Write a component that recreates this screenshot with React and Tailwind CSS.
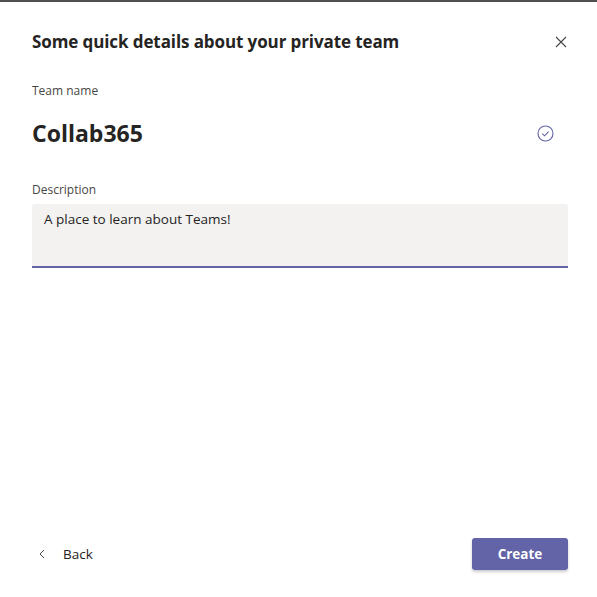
export default function App() {
  return (
    <div className="w-[597px] h-[597px] bg-white flex flex-col text-[#252423]" style={{ fontFamily: '"Open Sans", "Noto Sans", sans-serif' }}>
      <div className="h-[2px] bg-[#4f4f4f] shrink-0" />
      <div className="flex items-center justify-between pl-8 pr-[30px] pt-[28px]">
        <h1 className="text-[17px] font-bold leading-[24px] tracking-[-0.1px]">Some quick details about your private team</h1>
        <svg width="12" height="12" viewBox="0 0 12 12" className="text-[#484644]">
          <path d="M1 1 L11 11 M11 1 L1 11" stroke="currentColor" strokeWidth="1.1" fill="none" />
        </svg>
      </div>
      <div className="pl-8 pr-[29px] pt-[29px]">
        <div className="text-[12px] leading-[16px] text-[#484644]">Team name</div>
        <div className="flex items-center justify-between pt-[18px] pr-[14px]">
          <div className="text-[23px] font-bold leading-[32px]">Collab365</div>
          <svg width="17" height="17" viewBox="0 0 17 17" className="text-[#6264a7]">
            <circle cx="8.5" cy="8.5" r="7.5" stroke="currentColor" strokeWidth="1.1" fill="none" />
            <path d="M5.3 8.7 L7.5 10.8 L11.6 6.6" stroke="currentColor" strokeWidth="1.1" fill="none" />
          </svg>
        </div>
        <div className="text-[12px] leading-[16px] text-[#484644] pt-[33px]">Description</div>
        <div className="mt-[6px] h-[64px] bg-[#f3f2f1] border-b-2 border-[#6264a7] rounded-t-[3px] px-3 pt-[5px] text-[13.5px] leading-[20px]">
          A place to learn about Teams!
        </div>
      </div>
      <div className="flex-1" />
      <div className="flex items-center justify-between pl-[37px] pr-[29px] pb-[27px]">
        <div className="flex items-center gap-[16px] text-[13.5px] text-[#252423]">
          <svg width="10" height="10" viewBox="0 0 10 10" className="text-[#484644]">
            <path d="M7 1 L3 5 L7 9" stroke="currentColor" strokeWidth="1" fill="none" />
          </svg>
          <span>Back</span>
        </div>
        <button className="w-[96px] h-[32px] bg-[#6264a7] text-white text-[13.5px] font-bold rounded-[3px] shadow-[0_2px_3px_rgba(0,0,0,0.2)]">Create</button>
      </div>
    </div>
  );
}
